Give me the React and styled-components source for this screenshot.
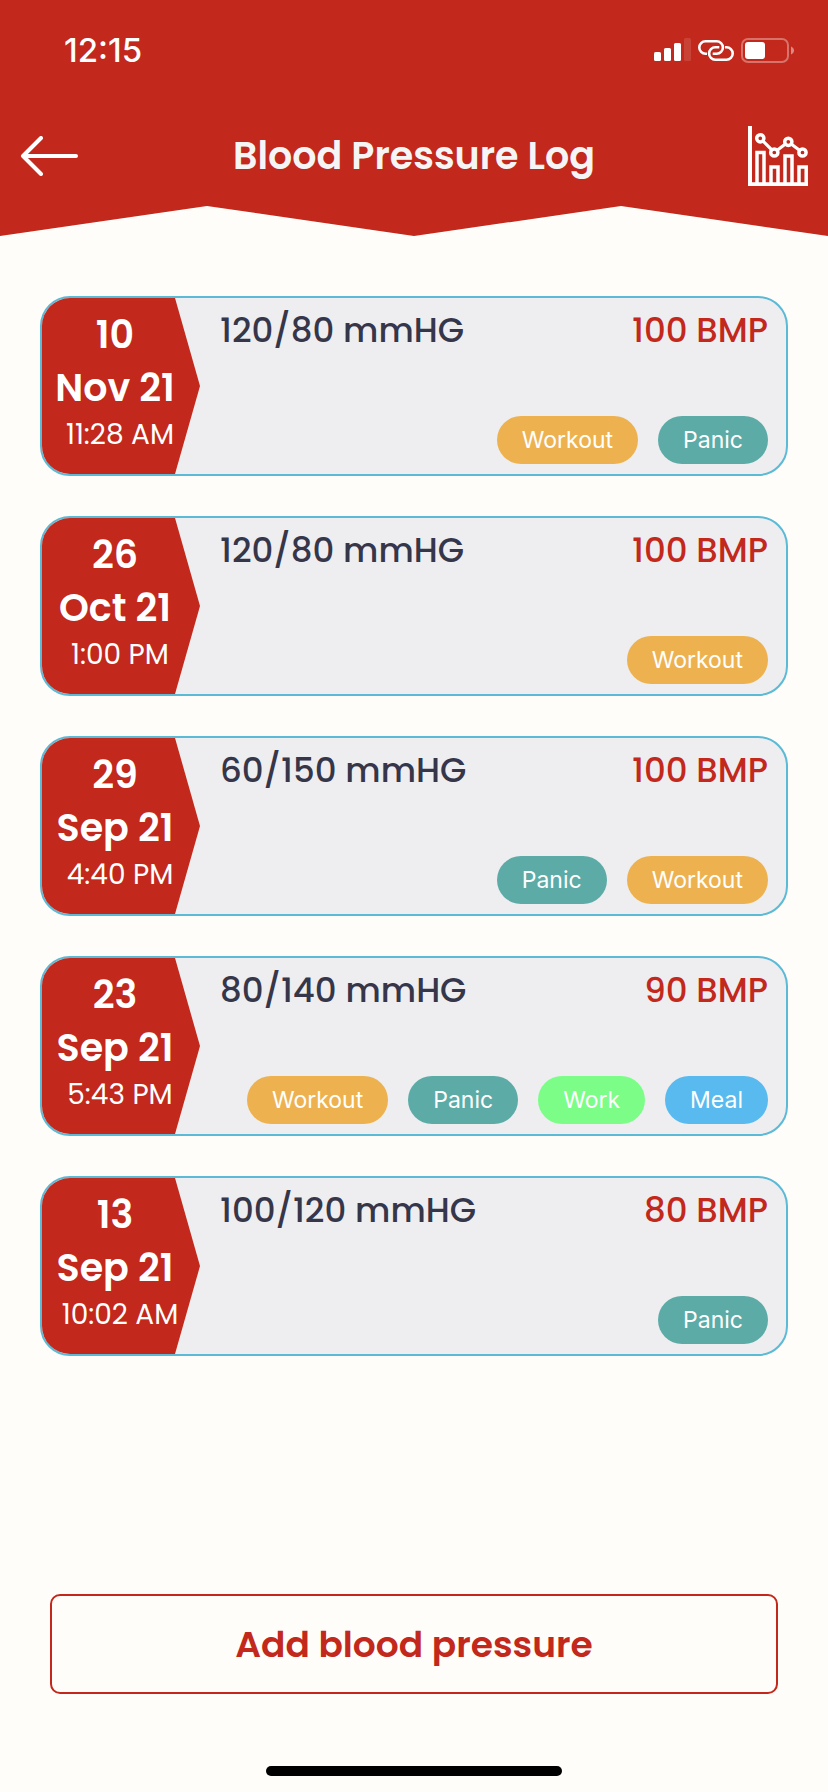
import React from 'react';
import styled, { createGlobalStyle } from 'styled-components';

const GlobalStyle = createGlobalStyle`
  :root {
    --red: #c2281b;
    --bg: #fffdf9;
    --card: #eeeef1;
    --card-border: #5bbad5;
    --dark: #36364a;
    --white: #ffffff;
  }
  * {
    box-sizing: border-box;
    margin: 0;
    padding: 0;
  }
  body {
    background-color: var(--bg);
    font-family: Poppins, Inter, 'Liberation Sans', sans-serif;
  }
  button {
    font-family: inherit;
    cursor: pointer;
  }
  ul {
    list-style: none;
  }
`;

const PageStyles = styled.div`
  min-height: 100vh;
  display: flex;
  flex-direction: column;
  background-color: var(--bg);
`;

const HeaderStyles = styled.header`
  background-color: var(--red);
  color: var(--white);
  padding-bottom: 24px;
  clip-path: polygon(
    0 0,
    100% 0,
    100% 100%,
    75% calc(100% - 30px),
    50% 100%,
    25% calc(100% - 30px),
    0 100%
  );
`;

const StatusBar = styled.div`
  height: 100px;
  padding: 0 34px 0 64px;
  display: flex;
  align-items: center;
  justify-content: space-between;
`;

const Clock = styled.span`
  font-family: Inter, 'Liberation Sans', sans-serif;
  font-size: 33px;
  line-height: 40px;
  font-weight: 500;
`;

const StatusIcons = styled.div`
  display: flex;
  align-items: center;
  gap: 7px;
  svg {
    display: block;
  }
`;

const NavBar = styled.nav`
  height: 112px;
  padding: 0 20px;
  display: grid;
  grid-template-columns: 60px 1fr 60px;
  align-items: center;
`;

const Title = styled.h1`
  font-size: 38px;
  line-height: 56px;
  font-weight: 600;
  text-align: center;
  color: #f5f5f6;
`;

const IconButton = styled.button`
  display: flex;
  border: none;
  background: none;
  color: var(--white);
`;

const LogList = styled.ul`
  padding: 60px 40px;
  display: flex;
  flex-direction: column;
  gap: 40px;
`;

const Card = styled.li`
  display: flex;
  min-height: 180px;
  border: 2px solid var(--card-border);
  border-radius: 30px;
  background-color: var(--card);
  overflow: hidden;
`;

const DateFlag = styled.div`
  width: 158px;
  flex-shrink: 0;
  padding: 0 12px 8px 0;
  display: flex;
  flex-direction: column;
  justify-content: center;
  text-align: center;
  color: var(--white);
  background-color: var(--red);
  clip-path: polygon(0 0, 133px 0, 100% 50%, 133px 100%, 0 100%);
`;

const DateText = styled.p`
  font-size: 38px;
  line-height: 53px;
  font-weight: 600;
  white-space: nowrap;
`;

const TimeText = styled.p`
  padding-left: 10px;
  font-size: 28px;
  line-height: 42px;
  font-weight: 400;
  white-space: nowrap;
`;

const CardBody = styled.div`
  flex: 1;
  padding: 10px 18px 10px 20px;
  display: flex;
  flex-direction: column;
  justify-content: space-between;
`;

const Readings = styled.div`
  display: flex;
  justify-content: space-between;
`;

const Reading = styled.p`
  font-size: 34px;
  line-height: 44px;
  font-weight: 500;
  color: ${({ $accent }) => ($accent ? 'var(--red)' : 'var(--dark)')};
`;

const Tags = styled.ul`
  display: flex;
  justify-content: flex-end;
  gap: 20px;
`;

const tagColors = {
  Workout: '#edb24f',
  Panic: '#5caba7',
  Work: '#7bfd87',
  Meal: '#58baee',
};

const Tag = styled.li`
  padding: 0 25px;
  border-radius: 24px;
  font-family: Inter, 'Liberation Sans', sans-serif;
  font-size: 23px;
  line-height: 48px;
  color: var(--white);
  background-color: ${({ $name }) => tagColors[$name]};
`;

const Footer = styled.footer`
  margin-top: auto;
  padding: 0 50px 16px;
  display: flex;
  flex-direction: column;
  align-items: center;
  gap: 72px;
`;

const AddButton = styled.button`
  width: 100%;
  height: 100px;
  border: 2px solid var(--red);
  border-radius: 10px;
  background: none;
  color: var(--red);
  font-size: 36px;
  font-weight: 600;
`;

const HomeIndicator = styled.div`
  width: 296px;
  height: 10px;
  border-radius: 5px;
  background-color: #000000;
`;

const logs = [
  { day: '10', month: 'Nov 21', time: '11:28 AM', pressure: '120/80', pulse: 100, tags: ['Workout', 'Panic'] },
  { day: '26', month: 'Oct 21', time: '1:00 PM', pressure: '120/80', pulse: 100, tags: ['Workout'] },
  { day: '29', month: 'Sep 21', time: '4:40 PM', pressure: '60/150', pulse: 100, tags: ['Panic', 'Workout'] },
  { day: '23', month: 'Sep 21', time: '5:43 PM', pressure: '80/140', pulse: 90, tags: ['Workout', 'Panic', 'Work', 'Meal'] },
  { day: '13', month: 'Sep 21', time: '10:02 AM', pressure: '100/120', pulse: 80, tags: ['Panic'] },
];

function SignalIcon() {
  return (
    <svg width="37" height="24" viewBox="0 0 37 24" fill="currentColor">
      <rect x="0" y="14" width="7" height="9" rx="1.5" />
      <rect x="10" y="10" width="7" height="13" rx="1.5" />
      <rect x="20" y="5" width="7" height="18" rx="1.5" />
      <rect x="30" y="0" width="7" height="23" rx="1.5" opacity="0.12" />
    </svg>
  );
}

function LinkIcon() {
  return (
    <svg width="36" height="21" viewBox="0 0 36 21" fill="none" stroke="currentColor" strokeWidth="2.6">
      <path d="M9 13.7H7.5a6.2 6.2 0 0 1 0-12.4h11.2a6.2 6.2 0 0 1 0 12.4h-4" />
      <path d="M27 7.3h1.5a6.2 6.2 0 0 1 0 12.4H17.3a6.2 6.2 0 0 1 0-12.4h4" />
    </svg>
  );
}

function BatteryIcon() {
  return (
    <svg width="53" height="25" viewBox="0 0 53 25" fill="currentColor">
      <rect x="1" y="1" width="46" height="23" rx="6" fill="none" stroke="currentColor" strokeWidth="2" opacity="0.35" />
      <rect x="4" y="4" width="20" height="17" rx="3" />
      <path d="M50 8.5c4 1.5 4 6.5 0 8z" opacity="0.45" />
    </svg>
  );
}

function ArrowIcon() {
  return (
    <svg
      width="58"
      height="40"
      viewBox="0 0 58 40"
      fill="none"
      stroke="currentColor"
      strokeWidth="4"
      strokeLinecap="round"
      strokeLinejoin="round"
    >
      <path d="M21 2 3 20l18 18M3 20h53" />
    </svg>
  );
}

function ChartIcon() {
  return (
    <svg width="60" height="60" viewBox="0 0 60 60" fill="none" stroke="currentColor" strokeWidth="3.5">
      <path d="M2 0v58.2h58" strokeWidth="4" />
      <path d="M9 58V26.5h7V58M23 58V41h7v17M37 58V30h7v28M51 58V41h7.2v17" />
      <circle cx="12.3" cy="12.3" r="3.6" />
      <circle cx="26.3" cy="26.5" r="3.6" />
      <circle cx="40.3" cy="15.8" r="3.6" />
      <circle cx="54.5" cy="26.5" r="3.6" />
      <path d="M14.8 14.9l9 9M29.2 24.2l8.2-6.2M43.2 18l8.3 6.2" strokeWidth="3.2" />
    </svg>
  );
}

function LogCard({ log }) {
  return (
    <Card>
      <DateFlag>
        <DateText>{log.day}</DateText>
        <DateText>{log.month}</DateText>
        <TimeText>{log.time}</TimeText>
      </DateFlag>
      <CardBody>
        <Readings>
          <Reading>{log.pressure} mmHG</Reading>
          <Reading $accent>{log.pulse} BMP</Reading>
        </Readings>
        <Tags>
          {log.tags.map((tag) => (
            <Tag key={tag} $name={tag}>
              {tag}
            </Tag>
          ))}
        </Tags>
      </CardBody>
    </Card>
  );
}

export default function App() {
  return (
    <>
      <GlobalStyle />
      <PageStyles>
        <HeaderStyles>
          <StatusBar>
            <Clock>12:15</Clock>
            <StatusIcons>
              <SignalIcon />
              <LinkIcon />
              <BatteryIcon />
            </StatusIcons>
          </StatusBar>
          <NavBar>
            <IconButton type="button" aria-label="Back">
              <ArrowIcon />
            </IconButton>
            <Title>Blood Pressure Log</Title>
            <IconButton type="button" aria-label="Show chart">
              <ChartIcon />
            </IconButton>
          </NavBar>
        </HeaderStyles>
        <main>
          <LogList>
            {logs.map((log) => (
              <LogCard key={log.month + log.day} log={log} />
            ))}
          </LogList>
        </main>
        <Footer>
          <AddButton type="button">Add blood pressure</AddButton>
          <HomeIndicator />
        </Footer>
      </PageStyles>
    </>
  );
}
